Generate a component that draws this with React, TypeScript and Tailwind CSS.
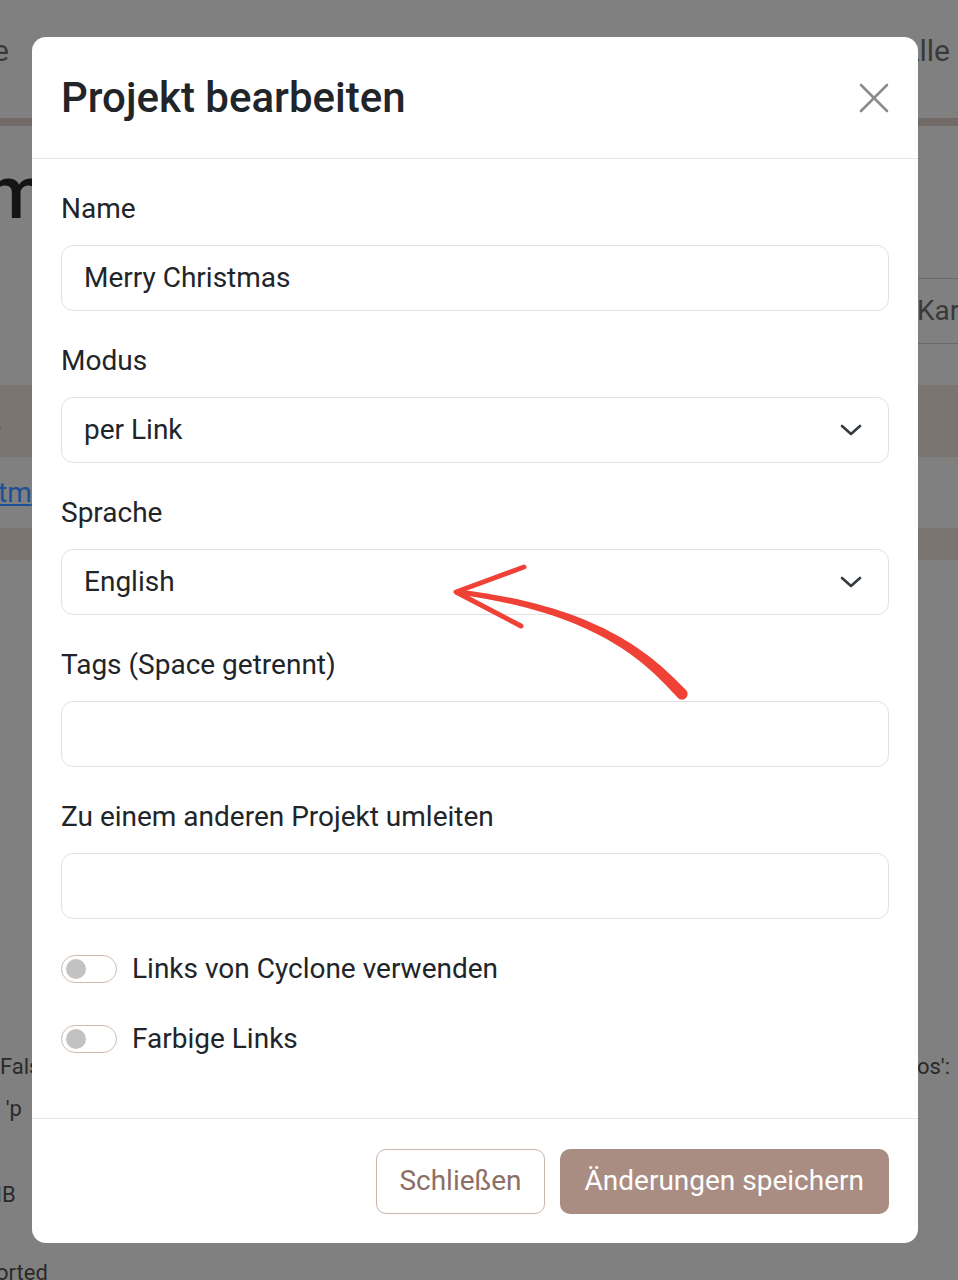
import React from 'react';

function Chevron() {
  return (
    <svg width="22" height="14" viewBox="0 0 22 14" fill="none" className="shrink-0">
      <path d="M2 3l9 8 9-8" stroke="#343a40" strokeWidth="2.6" strokeLinecap="round" strokeLinejoin="round" />
    </svg>
  );
}

function Toggle({ label }: { label: string }) {
  return (
    <div className="flex items-center gap-[15px] h-[42px]">
      <div className="w-[56px] h-[28px] rounded-full border-[1.5px] border-[#cdbcb3] bg-white flex items-center pl-[4px]">
        <div className="w-[20px] h-[20px] rounded-full bg-[#c2c2c2]" />
      </div>
      <span className="text-[28px] leading-[42px] text-[#212529]">{label}</span>
    </div>
  );
}

export default function App() {
  const fields = [
    { label: 'Name', value: 'Merry Christmas', select: false },
    { label: 'Modus', value: 'per Link', select: true },
    { label: 'Sprache', value: 'English', select: true },
    { label: 'Tags (Space getrennt)', value: '', select: false },
    { label: 'Zu einem anderen Projekt umleiten', value: '', select: false },
  ];

  return (
    <div className="relative w-[958px] h-[1280px] overflow-hidden bg-[#808080] font-['Roboto','Noto_Sans',sans-serif]">
      {/* page behind the backdrop */}
      <div className="h-[118px] flex items-start justify-between pt-[28px] text-[30px] text-[#3a3a3a]">
        <span className="-ml-[7px]">e</span>
        <span className="pr-[8px]">Alle</span>
      </div>
      <div className="h-[8px] bg-[#726a66]" />
      <div className="h-[152px] pt-[30px]">
        <span className="block -ml-[16px] text-[74px] font-medium leading-none text-[#141414]">m</span>
      </div>
      <div className="h-[107px] flex justify-end">
        <div className="h-[66px] w-[120px] -mr-[40px] border border-[#6a6a6a] rounded-[8px] pl-[38px] flex items-center text-[28px] text-[#3a3a3a]">
          Karte
        </div>
      </div>
      <div className="h-[72px] bg-[#7b7572] flex items-center text-[28px] font-bold text-[#141414]">
        <span className="-ml-[9px]">t</span>
      </div>
      <div className="h-[71px] flex items-center text-[28px]">
        <span className="-ml-[2px] underline text-[#1d4f96]">tm</span>
      </div>
      <div className="h-[32px] bg-[#7b7572]" />
      <div className="pt-[486px] text-[22px] leading-[42px] text-[#2a2a2a]">
        <div className="flex justify-between">
          <span>Fals</span>
          <span className="pr-[8px]">os':</span>
        </div>
        <div className="-ml-[4px]">, 'p</div>
        <div className="mt-[44px] -ml-[4px]">IB</div>
        <div className="mt-[36px] -ml-[4px]">orted</div>
      </div>

      {/* modal */}
      <div className="absolute left-[32px] top-[37px] w-[886px] bg-white rounded-[14px] overflow-hidden">
        <div className="h-[122px] flex items-center justify-between px-[29px] border-b border-[#e3e5e8]">
          <h2 className="text-[42px] font-medium text-[#212529]">Projekt bearbeiten</h2>
          <svg width="32" height="32" viewBox="0 0 32 32" fill="none" className="mr-[-1px]">
            <path d="M3 3l26 26M29 3L3 29" stroke="#8a8c8e" strokeWidth="2.6" strokeLinecap="round" />
          </svg>
        </div>

        <div className="px-[29px] pt-[29px] pb-[29px]">
          {fields.map((f) => (
            <div key={f.label} className="mb-[29px]">
              <div className="text-[28px] leading-[42px] text-[#212529] mb-[15px]">{f.label}</div>
              <div className="h-[66px] rounded-[12px] border border-[#dee2e6] pl-[22px] pr-[26px] flex items-center justify-between text-[28px] text-[#212529]">
                <span>{f.value}</span>
                {f.select && <Chevron />}
              </div>
            </div>
          ))}
          <div className="mb-[28px]">
            <Toggle label="Links von Cyclone verwenden" />
          </div>
          <div className="mb-[29px]">
            <Toggle label="Farbige Links" />
          </div>
        </div>

        <div className="h-[125px] border-t border-[#e3e5e8] flex items-center justify-end gap-[15px] px-[29px]">
          <button className="h-[65px] px-[22px] rounded-[10px] border-[1.5px] border-[#c9b5ab] bg-white text-[28px] text-[#8c6f65]">
            Schließen
          </button>
          <button className="h-[65px] px-[25px] rounded-[10px] bg-[#a98c82] text-[28px] text-white">
            Änderungen speichern
          </button>
        </div>
      </div>

      {/* red annotation arrow, tapered shaft */}
      <svg className="absolute left-0 top-0 pointer-events-none" width="958" height="1280" viewBox="0 0 958 1280" fill="none">
        <path
          d="M686 690 C653 656, 601 606.5, 458.3 589.5 L457.7 594.5 C599 613.5, 647 664, 678 698 A5.6 5.6 0 0 0 686 690 Z"
          fill="#ef4136"
        />
        <path d="M524 567 L456 592 L521 626" stroke="#ef4136" strokeWidth="5" strokeLinecap="round" strokeLinejoin="round" />
      </svg>
    </div>
  );
}
